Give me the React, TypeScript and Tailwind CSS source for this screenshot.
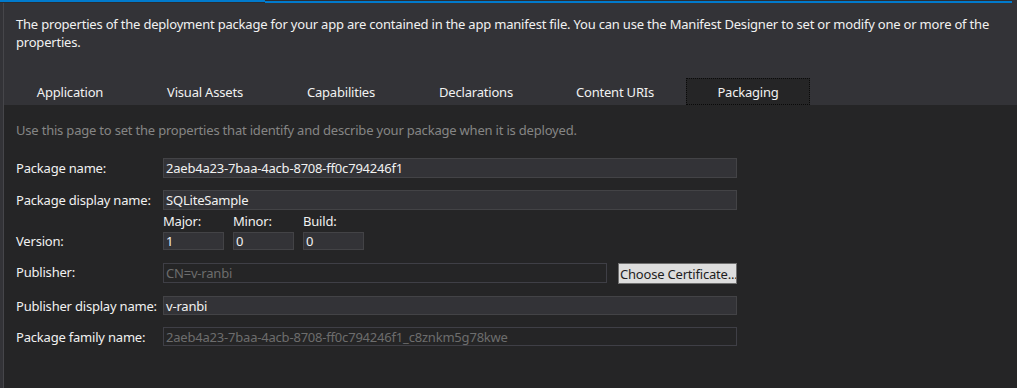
import React from "react";

const tabs = [
  { label: "Application", ml: "ml-[4px]" },
  { label: "Visual Assets", ml: "ml-[11px]" },
  { label: "Capabilities", ml: "ml-[12px]" },
  { label: "Declarations", ml: "ml-[11px]" },
  { label: "Content URIs", ml: "ml-[15px]" },
  { label: "Packaging", ml: "ml-[9px]", active: true },
];

const Field = ({
  value,
  disabled,
  className,
}: {
  value: string;
  disabled?: boolean;
  className?: string;
}) => (
  <div
    className={`flex items-center border pl-[2px] whitespace-nowrap overflow-hidden ${
      disabled
        ? "bg-[#252526] border-[#3f3f46] text-[#6d6d6d]"
        : "bg-[#333337] border-[#434346] text-[#f1f1f1]"
    } ${className ?? ""}`}
  >
    {value}
  </div>
);

const Label = ({ children }: { children: React.ReactNode }) => (
  <div className="w-[147px] shrink-0 text-[#f1f1f1]">{children}</div>
);

export default function App() {
  return (
    <div
      className="w-[1017px] h-[388px] bg-[#333337] flex flex-col overflow-hidden text-[13px] leading-[18px] tracking-[-0.2px]"
      style={{ fontFamily: '"Noto Sans", "Liberation Sans", sans-serif' }}
    >
      {/* top accent line */}
      <div className="flex h-[3px] shrink-0">
        <div className="w-[265px] flex flex-col">
          <div className="h-[2px] bg-[#007acc]" />
          <div className="h-[1px] bg-[#2d2d30]" />
        </div>
        <div className="flex-1 flex flex-col">
          <div className="h-[1px] bg-[#2d2d30]" />
          <div className="h-[2px] bg-[#007acc]" />
        </div>
        <div className="w-[5px] bg-[#333337]" />
      </div>

      <div className="flex-1 ml-[3px] border-l border-[#46464a] flex flex-col">
        {/* header */}
        <div className="pl-[12px] pt-[12px] text-[#f1f1f1] whitespace-nowrap">
          The properties of the deployment package for your app are contained in the app manifest file. You can use the
          Manifest Designer to set or modify one or more of the
          <br />
          properties.
        </div>

        {/* tabs */}
        <div className="flex mt-[27px] h-[27px] shrink-0">
          {tabs.map((t) => (
            <div
              key={t.label}
              className={`${t.ml} w-[124px] flex items-center justify-center text-[#f1f1f1] ${
                t.active ? "bg-[#252526] border border-dotted border-[#0a0a0a]" : ""
              }`}
            >
              {t.label}
            </div>
          ))}
        </div>

        {/* body */}
        <div className="flex-1 bg-[#252526] pl-[12px] pt-[16px]">
          <div className="text-[#858585]">
            Use this page to set the properties that identify and describe your package when it is deployed.
          </div>

          <div className="flex items-center mt-[19px] h-[20px]">
            <Label>Package name:</Label>
            <Field value="2aeb4a23-7baa-4acb-8708-ff0c794246f1" className="w-[574px] h-[20px]" />
          </div>

          <div className="flex items-center mt-[12px] h-[20px]">
            <Label>Package display name:</Label>
            <Field value="SQLiteSample" className="w-[574px] h-[20px]" />
          </div>

          <div className="flex items-end mt-[3px]">
            <div className="w-[147px] shrink-0 text-[#f1f1f1] h-[18px] flex items-center">Version:</div>
            {[
              ["Major:", "1"],
              ["Minor:", "0"],
              ["Build:", "0"],
            ].map(([l, v]) => (
              <div key={l} className="flex flex-col w-[61px] mr-[9px]">
                <div className="text-[#f1f1f1] leading-[17px] mb-[2px]">{l}</div>
                <Field value={v} className="w-[61px] h-[18px]" />
              </div>
            ))}
          </div>

          <div className="flex items-center mt-[13px] h-[21px]">
            <div className="w-[147px] shrink-0 text-[#f1f1f1] -mt-[3px]">Publisher:</div>
            <Field value="CN=v-ranbi" disabled className="w-[444px] h-[20px] self-start" />
            <button
              type="button"
              className="ml-[11px] w-[119px] h-[21px] bg-[#dddddd] border border-[#707070] text-[#1e1e1e] text-left pl-[1px] whitespace-nowrap overflow-hidden leading-[18px]"
            >
              Choose Certificate...
            </button>
          </div>

          <div className="flex items-center mt-[12px] h-[19px]">
            <Label>Publisher display name:</Label>
            <Field value="v-ranbi" className="w-[574px] h-[19px]" />
          </div>

          <div className="flex items-center mt-[12px] h-[19px]">
            <Label>Package family name:</Label>
            <Field
              value="2aeb4a23-7baa-4acb-8708-ff0c794246f1_c8znkm5g78kwe"
              disabled
              className="w-[574px] h-[19px]"
            />
          </div>
        </div>
      </div>
    </div>
  );
}
